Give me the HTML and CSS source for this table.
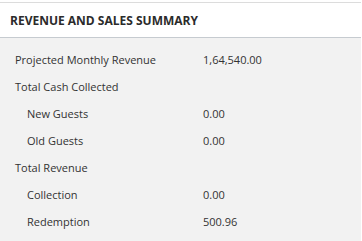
FILE: index.html
```html
<!DOCTYPE html>
<html>
<head>
<meta charset="utf-8">
<link rel="stylesheet" href="styles.css">
</head>
<body>
<div class="panel">
  <div class="panel-header">REVENUE AND SALES SUMMARY</div>
  <div class="panel-body">
    <div class="row"><span class="label">Projected Monthly Revenue</span><span class="value">1,64,540.00</span></div>
    <div class="row"><span class="label">Total Cash Collected</span><span class="value"></span></div>
    <div class="row sub"><span class="label">New Guests</span><span class="value">0.00</span></div>
    <div class="row sub"><span class="label">Old Guests</span><span class="value">0.00</span></div>
    <div class="row"><span class="label">Total Revenue</span><span class="value"></span></div>
    <div class="row sub"><span class="label">Collection</span><span class="value">0.00</span></div>
    <div class="row sub"><span class="label">Redemption</span><span class="value">500.96</span></div>
  </div>
</div>
</body>
</html>
```
FILE: styles.css
```css
html, body {
  margin: 0;
  padding: 0;
  background: #ffffff;
}
body {
  font-family: "Open Sans", "Noto Sans", sans-serif;
  color: #333333;
  height: 241px;
  overflow: hidden;
}
.panel {
  width: 361px;
  margin-top: 2px;
  border-top: 1px solid #dcdcdc;
}
.panel-header {
  height: 35px;
  box-sizing: border-box;
  padding-left: 10px;
  padding-top: 1px;
  display: flex;
  align-items: center;
  font-size: 12px;
  font-weight: 700;
  color: #2b2b2b;
  border-bottom: 1px solid #c6cbd0;
}
.panel-body {
  background: #f2f2f2;
  box-sizing: border-box;
  padding: 8px 0 0 15px;
  height: 203px;
}
.row {
  display: flex;
  height: 27px;
  align-items: center;
  font-size: 11px;
}
.label {
  width: 188px;
}
.row.sub .label {
  padding-left: 12px;
  width: 176px;
}
```
